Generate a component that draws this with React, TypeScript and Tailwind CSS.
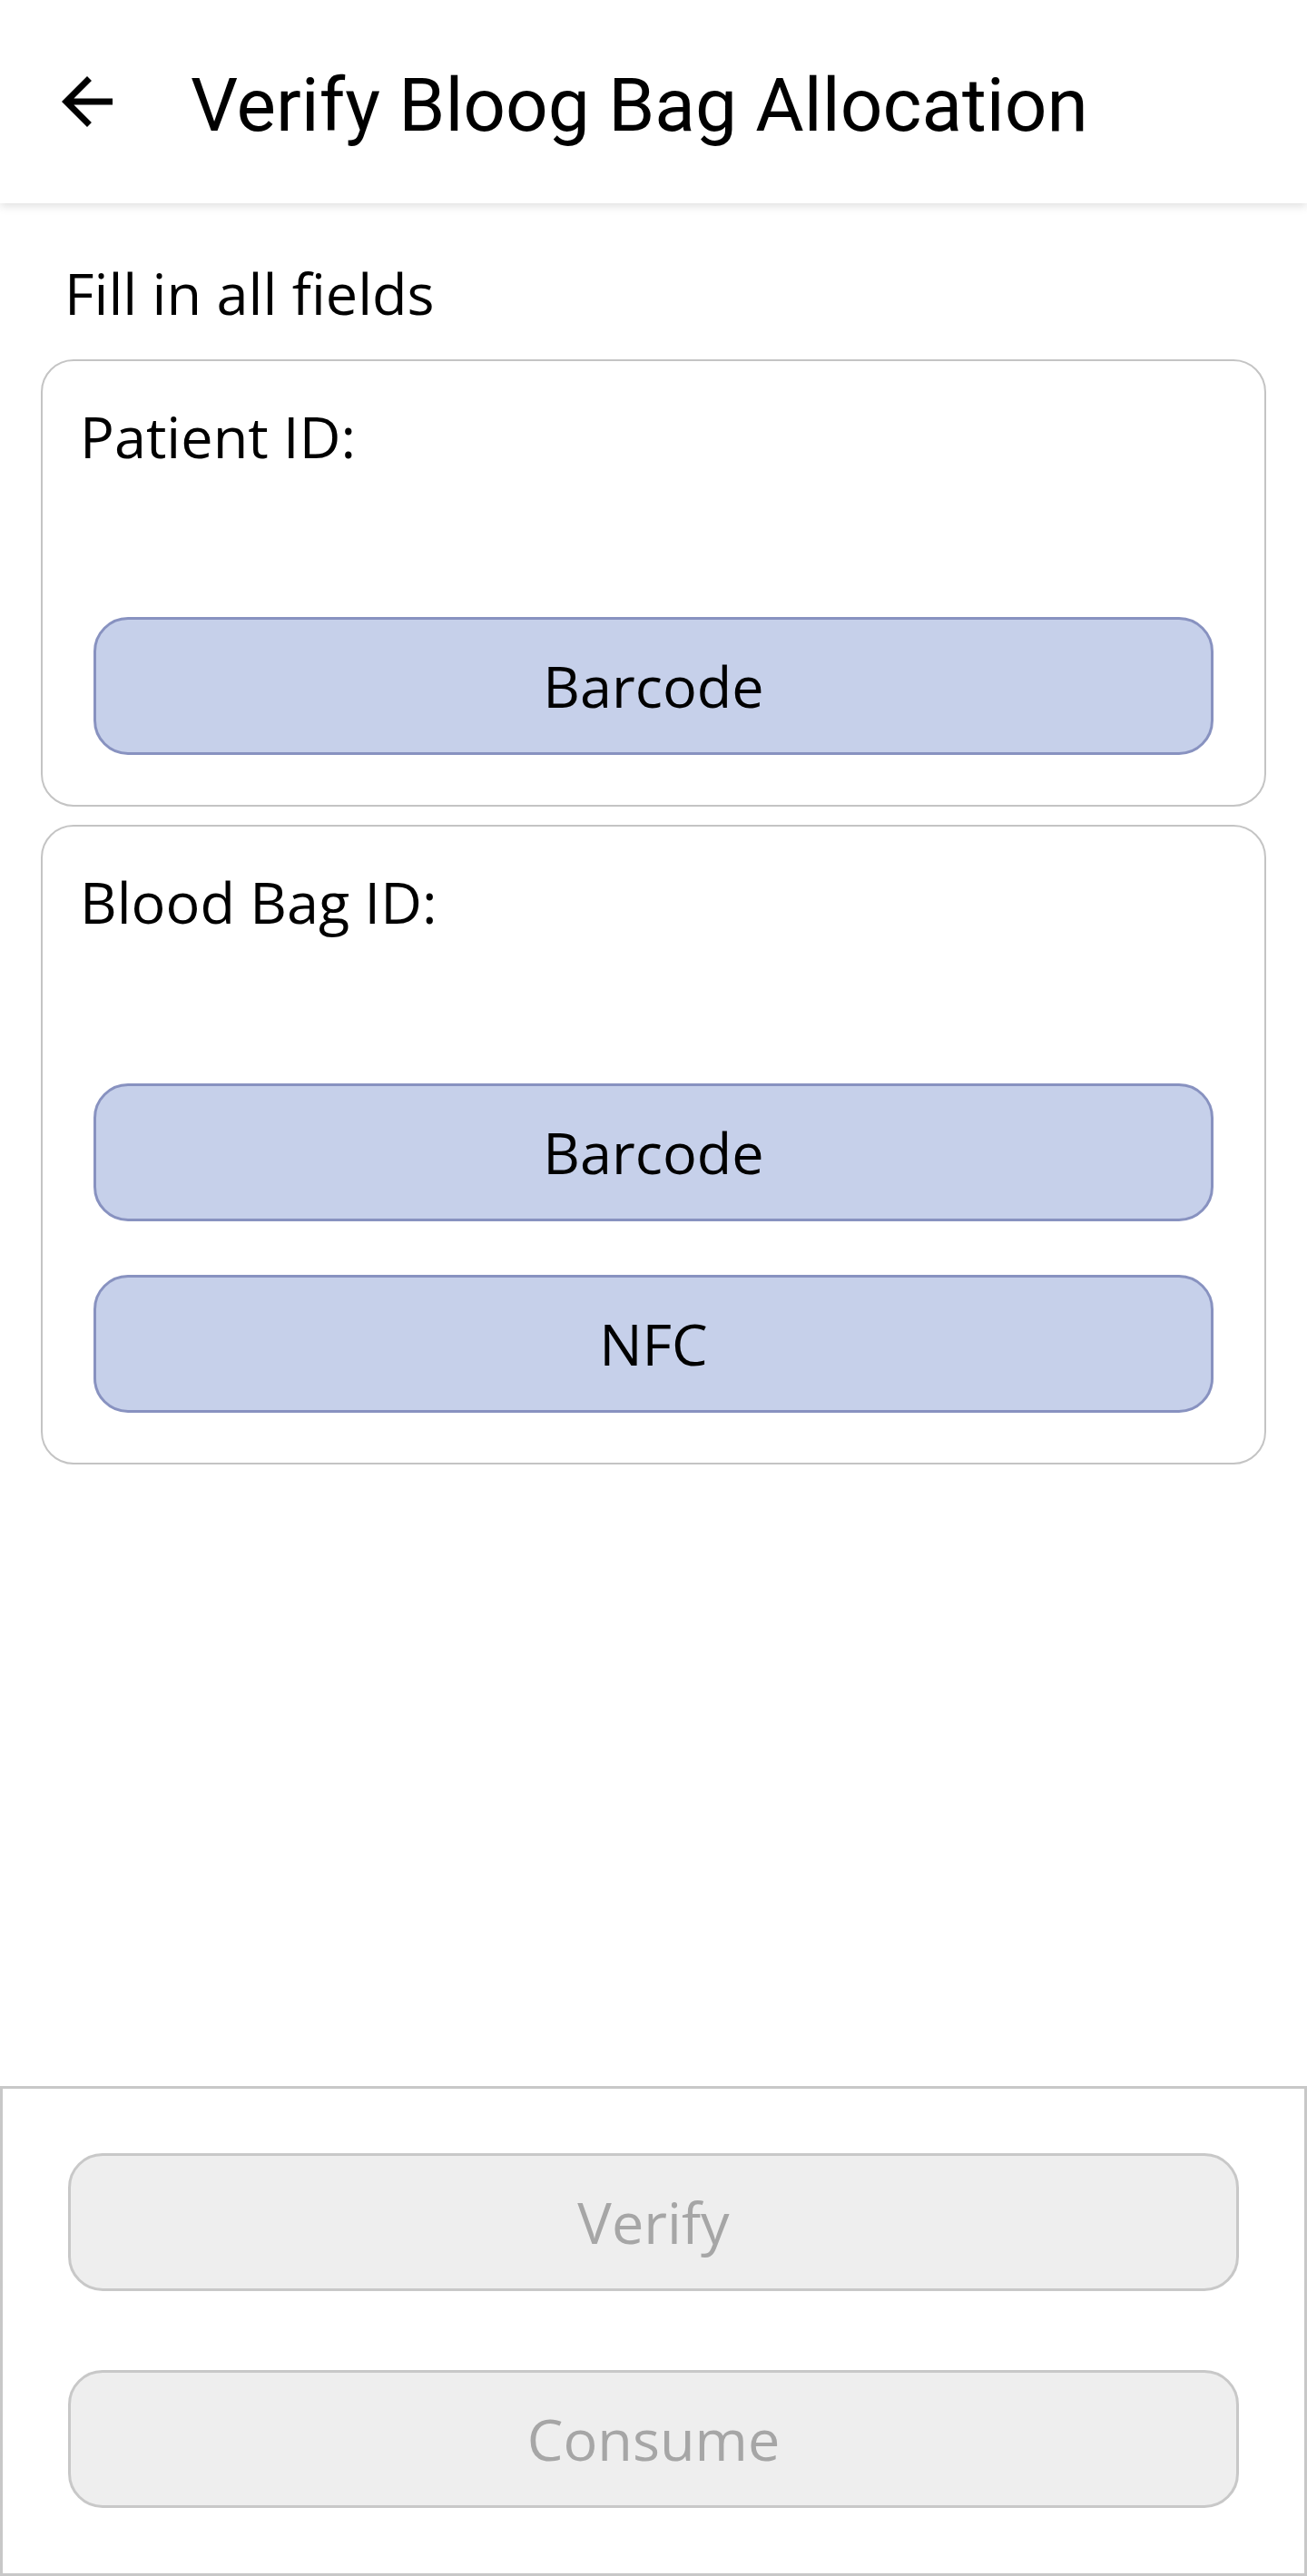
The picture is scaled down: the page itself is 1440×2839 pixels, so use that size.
import React from 'react';

const ScanButton = ({ label }: { label: string }) => (
    <button
        type="button"
        className="w-full h-[152px] rounded-[38px] border-[3px] border-[#8892c0] bg-[#c6d0ea] text-black text-[63px] leading-[86px]"
    >
        {label}
    </button>
);

const FooterButton = ({ label }: { label: string }) => (
    <button
        type="button"
        disabled
        className="w-full h-[152px] rounded-[38px] border-[3px] border-[#c8c8c8] bg-[#eeeeee] text-[#a6a6a6] text-[63px] leading-[86px]"
    >
        {label}
    </button>
);

const App = () => {
    return (
        <div className="min-h-screen flex flex-col bg-white font-['Open_Sans',sans-serif]">

            {/* App bar */}
            <header className="relative z-10 h-[224px] shrink-0 flex items-center bg-white shadow-[0_3px_10px_rgba(0,0,0,0.13)]">
                <button type="button" className="ml-[54px] w-[84px] h-[84px] flex items-center justify-center">
                    <svg viewBox="0 0 24 24" className="w-[84px] h-[84px]" fill="#000">
                        <path d="M20 11H7.83l5.59-5.59L12 4l-8 8 8 8 1.41-1.41L7.83 13H20v-2z"/>
                    </svg>
                </button>
                <h1 className="ml-[72px] mt-[8px] text-[82px] leading-[96px] text-black font-['Roboto',sans-serif] font-normal">
                    Verify Bloog Bag Allocation
                </h1>
            </header>

            {/* Form */}
            <main className="flex-1 px-[45px] pt-[56px]">
                <p className="pl-[26px] text-[63px] leading-[86px] text-black">Fill in all fields</p>

                <section className="mt-[30px] border-[2.5px] border-[#c4c4c4] rounded-[36px] pt-[40px] pb-[55px]">
                    <div className="pl-[41px] text-[63px] leading-[86px] text-black">Patient ID:</div>
                    <div className="mt-[156px] px-[56px]">
                        <ScanButton label="Barcode"/>
                    </div>
                </section>

                <section className="mt-[20px] border-[2.5px] border-[#c4c4c4] rounded-[36px] pt-[40px] pb-[55px]">
                    <div className="pl-[41px] text-[63px] leading-[86px] text-black">Blood Bag ID:</div>
                    <div className="mt-[157px] px-[56px] flex flex-col gap-[59px]">
                        <ScanButton label="Barcode"/>
                        <ScanButton label="NFC"/>
                    </div>
                </section>
            </main>

            {/* Actions */}
            <footer className="h-[540px] shrink-0 border-[3px] border-[#c8c8c8] bg-white px-[72px] pt-[71px] flex flex-col gap-[87px]">
                <FooterButton label="Verify"/>
                <FooterButton label="Consume"/>
            </footer>
        </div>
    );
};

export default App;
